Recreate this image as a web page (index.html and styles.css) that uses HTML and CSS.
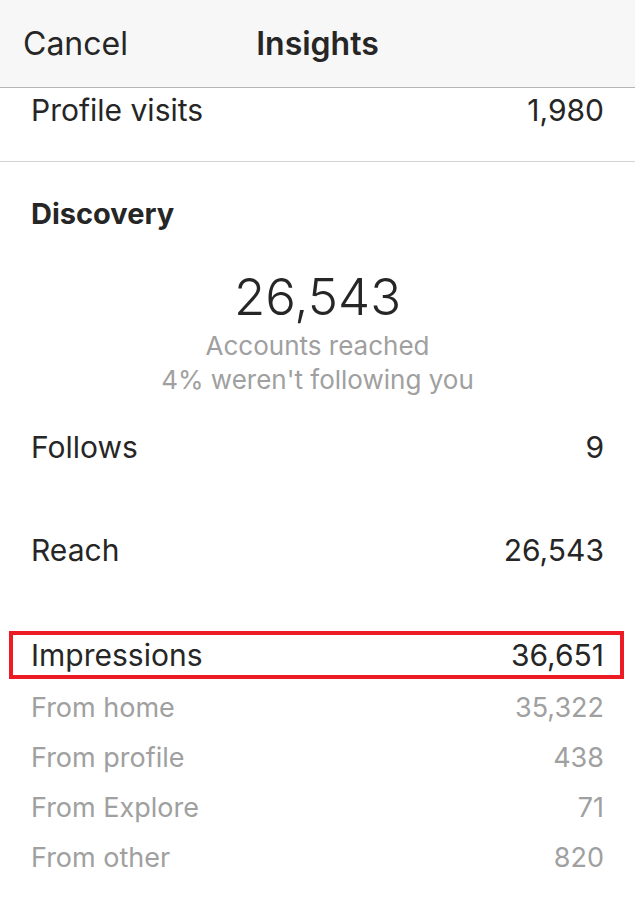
FILE: index.html
```html
<!DOCTYPE html>
<html lang="en">

<head>
    <meta charset="UTF-8">
    <meta name="viewport" content="width=device-width, initial-scale=1.0">
    <title>Insights</title>
    <link rel="stylesheet" href="styles.css">
</head>

<body>

    <!-- Верхняя панель -->
    <div class="nav-bar">
        <span class="nav-cancel">Cancel</span>
        <span class="nav-title">Insights</span>
        <span></span>
    </div>

    <div class="stat-row top-row">
        <span>Profile visits</span>
        <span>1,980</span>
    </div>

    <div class="section">
        <h2 class="section-title">Discovery</h2>

        <div class="summary">
            <div class="summary-number">26,543</div>
            <div class="summary-label">Accounts reached</div>
            <div class="summary-label">4% weren't following you</div>
        </div>

        <div class="main-list">
            <div class="stat-row big-row">
                <span>Follows</span>
                <span>9</span>
            </div>
            <div class="stat-row big-row">
                <span>Reach</span>
                <span>26,543</span>
            </div>
            <div class="stat-row highlight">
                <span>Impressions</span>
                <span>36,651</span>
            </div>
        </div>

        <div class="sub-list">
            <div class="stat-row sub-row">
                <span>From home</span>
                <span>35,322</span>
            </div>
            <div class="stat-row sub-row">
                <span>From profile</span>
                <span>438</span>
            </div>
            <div class="stat-row sub-row">
                <span>From Explore</span>
                <span>71</span>
            </div>
            <div class="stat-row sub-row">
                <span>From other</span>
                <span>820</span>
            </div>
        </div>
    </div>

</body>

</html>
```

FILE: styles.css
```css
/* Основные стили */
body {
    font-family: 'Inter', 'Roboto', sans-serif;
    margin: 0;
    background: #ffffff;
    color: #262626;
    font-size: 30px;
}

/* Верхняя панель */
.nav-bar {
    display: grid;
    grid-template-columns: 1fr auto 1fr;
    align-items: center;
    height: 87px;
    padding: 0 23px;
    background-color: #f7f7f7;
    border-bottom: 1px solid #b5b5b5;
}

.nav-cancel {
    font-size: 32px;
    color: #262626;
}

.nav-title {
    font-size: 32px;
    font-weight: 600;
}

/* Строки статистики */
.stat-row {
    display: flex;
    justify-content: space-between;
    align-items: center;
    padding: 0 31px;
    line-height: 44px;
}

.top-row {
    padding-bottom: 29px;
    border-bottom: 1px solid #d4d4d4;
}

.section {
    padding-top: 32px;
}

.section-title {
    margin: 0;
    padding: 0 31px;
    font-size: 29px;
    font-weight: 700;
    line-height: 40px;
}

/* Блок с главным числом */
.summary {
    margin-top: 33px;
    text-align: center;
}

.summary-number {
    font-size: 51px;
    font-weight: 300;
    line-height: 60px;
    margin-bottom: 2px;
}

.summary-label {
    font-size: 26px;
    line-height: 34px;
    color: #a0a0a0;
}

.main-list {
    margin-top: 28px;
}

.big-row {
    margin-bottom: 59px;
}

/* Выделенная строка */
.highlight {
    margin: 0 11px 0 9px;
    padding: 0 16px 0 18px;
    line-height: 40px;
    border: 4px solid #ed1c24;
}

.sub-list {
    margin-top: 4px;
}

.sub-row {
    font-size: 27px;
    line-height: 50px;
    color: #a0a0a0;
}
```
